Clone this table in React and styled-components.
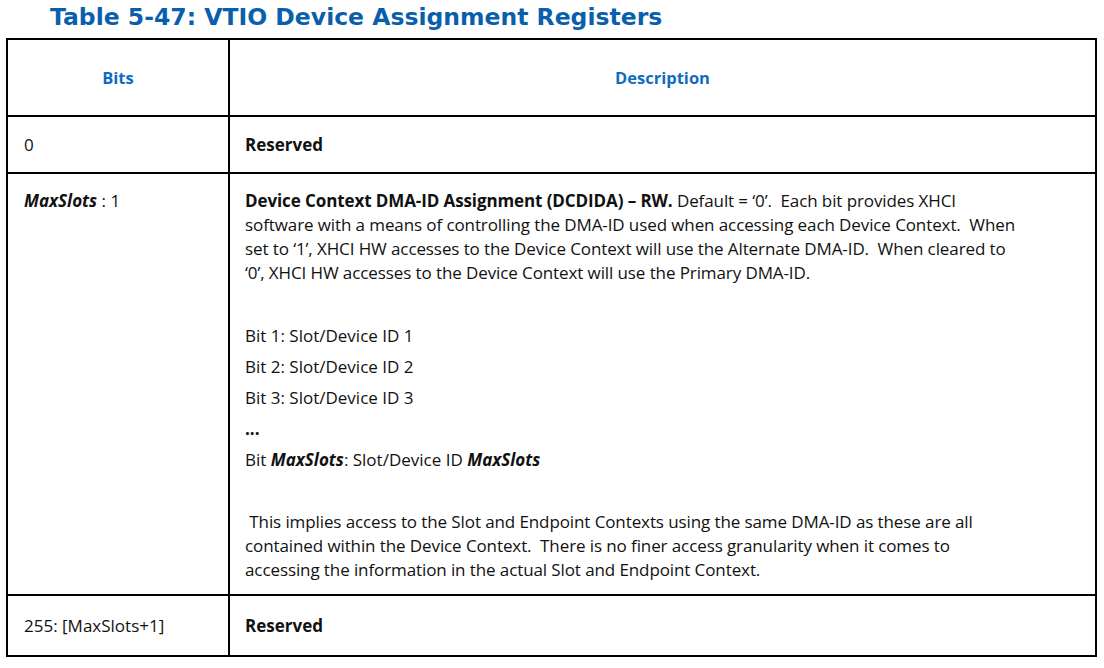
import React from 'react';
import styled, { createGlobalStyle } from 'styled-components';

const GlobalStyle = createGlobalStyle`
  html, body {
    margin: 0;
    background: #fff;
  }
`;

const bitLines = [
  'Bit 1: Slot/Device ID 1',
  'Bit 2: Slot/Device ID 2',
  'Bit 3: Slot/Device ID 3',
];

const App = () => (
  <Page>
    <GlobalStyle />
    <Title>Table 5-47: VTIO Device Assignment Registers</Title>
    <Table>
      <colgroup>
        <col style={{ width: '222px' }} />
        <col />
      </colgroup>
      <thead>
        <tr>
          <HeadCell>Bits</HeadCell>
          <HeadCell>Description</HeadCell>
        </tr>
      </thead>
      <tbody>
        <Row height={57}>
          <Cell>0</Cell>
          <Cell>
            <strong>Reserved</strong>
          </Cell>
        </Row>
        <Row>
          <Cell top>
            <em>
              <strong>MaxSlots</strong>
            </em>{' '}
            : 1
          </Cell>
          <Cell top>
            {/* line breaks follow the source document */}
            <Para>
              <strong>Device Context DMA-ID Assignment (DCDIDA) – RW.</strong> Default = ‘0’.&nbsp; Each
              bit provides XHCI
              <br />
              software with a means of controlling the DMA-ID used when accessing each Device
              Context.&nbsp; When
              <br />
              set to ‘1’, XHCI HW accesses to the Device Context will use the Alternate DMA-ID.&nbsp; When
              cleared to
              <br />
              ‘0’, XHCI HW accesses to the Device Context will use the Primary DMA-ID.
            </Para>
            <BitList>
              {bitLines.map((line) => (
                <BitLine key={line}>{line}</BitLine>
              ))}
              <BitLine>
                <strong>...</strong>
              </BitLine>
              <BitLine>
                Bit{' '}
                <em>
                  <strong>MaxSlots</strong>
                </em>
                : Slot/Device ID{' '}
                <em>
                  <strong>MaxSlots</strong>
                </em>
              </BitLine>
            </BitList>
            <Para gap>
              &nbsp;This implies access to the Slot and Endpoint Contexts using the same DMA-ID as these
              are all
              <br />
              contained within the Device Context.&nbsp; There is no finer access granularity when it
              comes to
              <br />
              accessing the information in the actual Slot and Endpoint Context.
            </Para>
          </Cell>
        </Row>
        <Row height={61}>
          <Cell>255: [MaxSlots+1]</Cell>
          <Cell>
            <strong>Reserved</strong>
          </Cell>
        </Row>
      </tbody>
    </Table>
  </Page>
);

const Page = styled.div`
  padding: 3px 7px 10px 6px;
  font-family: 'Open Sans', 'Noto Sans', sans-serif;
  color: #111;
`;

const Title = styled.h1`
  margin: 0 0 7px 44px;
  font-family: 'DejaVu Sans', Verdana, sans-serif;
  font-size: 23.5px;
  font-weight: bold;
  line-height: 28px;
  color: #0a5fad;
`;

const Table = styled.table`
  width: 1091px;
  border-collapse: collapse;
  table-layout: fixed;
  border: 2px solid #000;
`;

const HeadCell = styled.th`
  height: 75px;
  padding: 0;
  border: 2px solid #000;
  text-align: center;
  vertical-align: middle;
  font-size: 16.5px;
  font-weight: bold;
  color: #0f6cc0;
`;

const Row = styled.tr`
  height: ${({ height }) => (height ? `${height}px` : 'auto')};
`;

const Cell = styled.td`
  padding: ${({ top }) => (top ? '15px 12px 12px 15px' : '0 15px')};
  border: 2px solid #000;
  vertical-align: ${({ top }) => (top ? 'top' : 'middle')};
  font-size: 17px;
  line-height: 24px;

  &:first-child {
    padding-left: 16px;
  }
`;

const Para = styled.p`
  margin: ${({ gap }) => (gap ? '35px 0 0' : '0')};
  white-space: nowrap;
  letter-spacing: -0.1px;
`;

const BitList = styled.div`
  margin-top: 35px;
`;

const BitLine = styled.div`
  line-height: 31px;
`;

export default App;
